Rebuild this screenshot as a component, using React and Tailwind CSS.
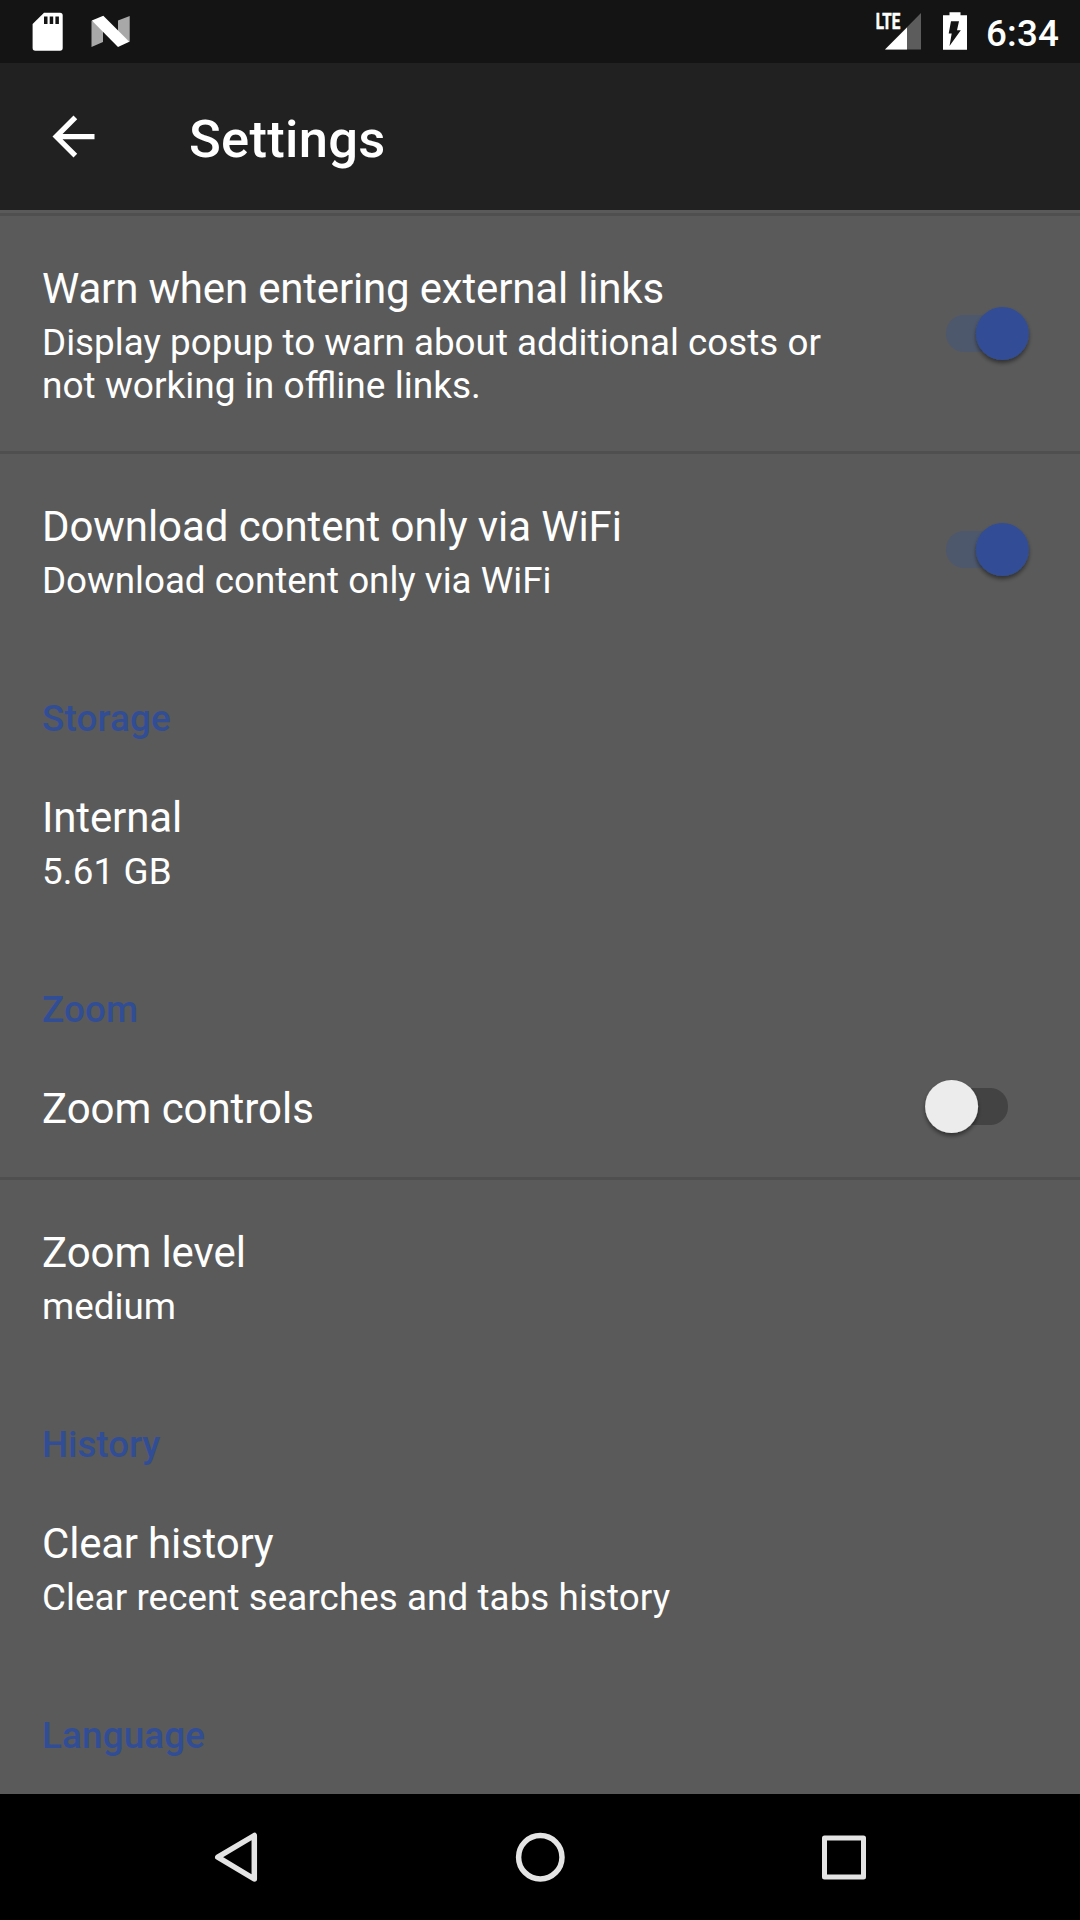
const Switch = ({ on }) => (
  <svg className="mr-[40px] h-[73px] w-[126px] shrink-0" viewBox="0 0 126 73">
    <defs>
      <filter id="thumb" x="-30%" y="-30%" width="160%" height="160%">
        <feDropShadow dx="0" dy="3" stdDeviation="2.2" floodOpacity="0.45" />
      </filter>
    </defs>
    <rect x="32" y="18" width="62" height="37" rx="18" fill={on ? "#4e586d" : "#434343"} />
    <circle cx={on ? 88.4 : 37.6} cy="36.5" r="26.5" fill={on ? "#304d96" : "#ececec"} filter="url(#thumb)" />
  </svg>
);

const Row = ({ title, tracking = "tracking-[-0.14px]", summary, height = "h-[191px]", children }) => (
  <div className={"flex justify-between pl-[42px] " + height}>
    <div className="w-[820px] pt-[48px]">
      <div className={"text-[42px] leading-[49px] " + tracking}>{title}</div>
      {summary && <div className="mt-[8px] text-[36.75px] leading-[43px]">{summary}</div>}
    </div>
    <div className="flex items-center">{children}</div>
  </div>
);

const Divider = () => <div className="h-[3px] bg-[#4f4f4f]" />;

const Heading = ({ children, tracking = "tracking-[0.18px]" }) => (
  <div className={"h-[100px] pt-[52px] pl-[42px] text-[36.75px] leading-[43px] font-medium text-[#304d96] " + tracking}>
    {children}
  </div>
);

export default function App() {
  return (
    <div className="flex h-[1920px] w-[1080px] flex-col overflow-hidden bg-[#5a5a5a] font-['Roboto',sans-serif] text-white">
      <header className="flex h-[63px] shrink-0 justify-between bg-[#141414]">
        <svg className="h-[63px] w-[140px]" viewBox="0 0 140 63">
          <path d="M44 12.7H60a2.7 2.7 0 0 1 2.7 2.7V48a2.7 2.7 0 0 1-2.7 2.7H35.300a2.7 2.7 0 0 1-2.7-2.7V24z" fill="#fff" />
          <path d="M44 16.500h3.500v7.500h-3.500zM49.700 16.500h3.500v7.500h-3.500zM55.400 16.500h3.500v7.500h-3.500z" fill="#141414" />
          <path d="M91.500 20.500L103 28v14l-11.500 5zM118 20.500l11.700-4.500v26L118 34z" fill="#a8a8a8" />
          <path d="M91.800 20.500L103.300 15.800L129.300 41.800L118 47z" fill="#fff" />
        </svg>
        <div className="flex">
          <svg className="h-[63px] w-[100px]" viewBox="870 0 100 63">
            <path d="M921 13v36.500H885z" fill="#5c5c5c" />
            <path d="M907 27.500v22H885z" fill="#fff" />
            <text x="875.800" y="28.900" fontSize="22" fontWeight="700" textLength="24.500" lengthAdjust="spacingAndGlyphs" fill="#fff" stroke="#fff" strokeWidth="0.6">LTE</text>
            <path d="M949.500 12.300h11v3h6.500v34.500h-24V15.300h6.500z" fill="#fff" />
            <path d="M951 21.300h8l-2 9h3.800L949.500 46l2.200-12.500h-3z" fill="#141414" />
          </svg>
          <div className="w-[110px] pl-[16px] pt-[12px] text-[36.75px] leading-[43px] font-medium tracking-[0.2px]">6:34</div>
        </div>
      </header>
      <div className="flex h-[147px] shrink-0 items-center bg-[#212121]">
        <svg className="ml-[42px] h-[63px] w-[63px] shrink-0" viewBox="0 0 24 24" fill="#fff">
          <path d="M20 11H7.830l5.590-5.590L12 4l-8 8 8 8 1.410-1.410L7.830 13H20z" />
        </svg>
        <h1 className="ml-[84px] pt-[5px] text-[52.5px] leading-[62px] font-medium tracking-[0.3px]">Settings</h1>
      </div>
      <main className="min-h-0 flex-1 overflow-hidden pt-[3px]">
        <Divider />
        <Row
          height="h-[235px]"
          title="Warn when entering external links"
          tracking="tracking-[-0.17px]"
          summary={
            <>
              <div className="tracking-[0.03px]">Display popup to warn about additional costs or</div>
              <div className="text-[37.1px]">not working in offline links.</div>
            </>
          }
        >
          <Switch on />
        </Row>
        <Divider />
        <Row title="Download content only via WiFi" tracking="tracking-[-0.08px]" summary="Download content only via WiFi">
          <Switch on />
        </Row>
        <Heading>Storage</Heading>
        <Row title="Internal" summary={<span className="tracking-[0.15px]">5.61 GB</span>} />
        <Heading>Zoom</Heading>
        <Row title="Zoom controls" tracking="tracking-[-0.05px]" height="h-[141px]">
          <Switch />
        </Row>
        <Divider />
        <Row title="Zoom level" tracking="tracking-[-0.08px]" summary="medium" />
        <Heading tracking="tracking-normal">History</Heading>
        <Row title="Clear history" tracking="tracking-[-0.2px]" summary={<span className="tracking-[0.08px]">Clear recent searches and tabs history</span>} />
        <Heading>Language</Heading>
      </main>
      <nav className="flex h-[126px] shrink-0 items-center justify-between bg-black px-[204px]">
        <svg className="h-[63px] w-[63px]" viewBox="204 1825.500 63 63" fill="none" stroke="#e4e4e4" strokeWidth="5.500" strokeLinejoin="round">
          <path d="M254.300 1835v43.500L217.800 1856.700z" />
        </svg>
        <svg className="h-[63px] w-[63px]" viewBox="508.500 1825.500 63 63" fill="none" stroke="#e4e4e4" strokeWidth="5.500">
          <circle cx="539.800" cy="1856.700" r="21.700" />
        </svg>
        <svg className="h-[63px] w-[63px]" viewBox="813 1825.500 63 63" fill="none" stroke="#e4e4e4" strokeWidth="5" strokeLinejoin="round">
          <rect x="824.500" y="1837.500" width="39" height="39" />
        </svg>
      </nav>
    </div>
  );
}
